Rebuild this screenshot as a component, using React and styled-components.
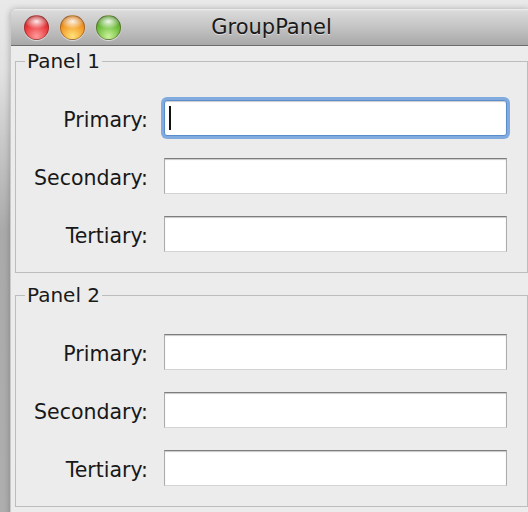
import React from 'react'
import styled, { createGlobalStyle } from 'styled-components'

const GlobalStyle = createGlobalStyle`
  html, body {
    margin: 0;
    height: 100%;
    overflow: hidden;
  }
  body {
    background: linear-gradient(#e9e9e9 0, #e2e2e2 70px, #aaaaaa 230px, #aeaeae 100%);
    font-family: "Lucida Grande", "DejaVu Sans", "Noto Sans", sans-serif;
    color: #1a1a1a;
  }
`

const Desktop = styled.div`
  padding: 9px 0 0 10px;
  height: 100vh;
  box-sizing: border-box;
`

const Window = styled.div`
  width: 521px;
  min-height: 520px;
  background: #ececec;
  border-left: 1px solid #c9c9c9;
  border-radius: 6px 6px 0 0;
  box-shadow: 0 0 6px rgba(0, 0, 0, 0.25);
  display: flex;
  flex-direction: column;
`

const TitleBar = styled.div`
  height: 36px;
  display: grid;
  grid-template-columns: 1fr auto 1fr;
  align-items: center;
  border-radius: 6px 6px 0 0;
  border-bottom: 1px solid #6d6d6d;
  background: linear-gradient(#efefef 0, #dadada 2px, #c4c4c4 50%, #a8a8a8 100%);
`

const Lights = styled.div`
  display: flex;
  gap: 11px;
  padding-left: 13px;
`

const palette = {
  red: ['#ff9a9a', '#e8383b', '#9c1b1e'],
  orange: ['#ffe27a', '#f29a26', '#b35e10'],
  green: ['#c9f29a', '#6cbb3a', '#3a7a1c'],
}

const Light = styled.span`
  width: 25px;
  height: 25px;
  border-radius: 50%;
  box-sizing: border-box;
  border: 1px solid rgba(60, 20, 10, 0.35);
  background:
    radial-gradient(ellipse 52% 32% at 50% 24%, rgba(255, 255, 255, 0.9), rgba(255, 255, 255, 0) 100%),
    radial-gradient(circle at 50% 88%, ${p => palette[p.$tone][0]} 0, ${p => palette[p.$tone][1]} 55%, ${p => palette[p.$tone][2]} 100%);
  box-shadow: 0 1px 1px rgba(255, 255, 255, 0.6);
`

const Title = styled.div`
  font-size: 21px;
  color: #1a1a1a;
  text-shadow: 0 1px 0 rgba(255, 255, 255, 0.5);
`

const Content = styled.div`
  display: flex;
  flex-direction: column;
  gap: 10px;
  padding: 3px 4px 0 4px;
`

const Panel = styled.fieldset`
  margin: 0;
  padding: 27px 18px 20px 0;
  border: 1px solid #bdbdbd;
  min-width: 0;
`

const Legend = styled.legend`
  margin-left: 9px;
  padding: 0 2px;
  font-size: 20px;
  line-height: 24px;
  color: #1a1a1a;
`

const Form = styled.div`
  display: grid;
  grid-template-columns: 132px 343px;
  column-gap: 16px;
  row-gap: 22px;
  align-items: center;
`

const Label = styled.label`
  text-align: right;
  font-size: 20.5px;
  padding-top: 3px;
  color: #181818;
`

const Field = styled.div`
  height: 36px;
  box-sizing: border-box;
  background: #fff;
  display: flex;
  align-items: center;
  border: 1px solid #ababab;
  border-top-color: #7d7d7d;
  border-bottom-color: #d4d4d4;
  box-shadow: inset 0 1px 1px rgba(0, 0, 0, 0.22);
  ${p => p.$focused && `
    border: 1px solid #5a8ccb;
    border-radius: 3px;
    box-shadow: 0 0 0 3px rgba(110, 160, 220, 0.85), inset 0 1px 1px rgba(0, 0, 0, 0.2);
  `}
`

const Caret = styled.span`
  width: 2px;
  height: 24px;
  margin-left: 4px;
  background: #111;
`

const fields = ['Primary', 'Secondary', 'Tertiary']

function GroupBox({ title, focusFirst }) {
  return (
    <Panel>
      <Legend>{title}</Legend>
      <Form>
        {fields.map((name, i) => (
          <React.Fragment key={name}>
            <Label>{name}:</Label>
            <Field $focused={focusFirst && i === 0}>
              {focusFirst && i === 0 && <Caret />}
            </Field>
          </React.Fragment>
        ))}
      </Form>
    </Panel>
  )
}

export default function App() {
  return (
    <>
      <GlobalStyle />
      <Desktop>
        <Window>
          <TitleBar>
            <Lights>
              <Light $tone="red" />
              <Light $tone="orange" />
              <Light $tone="green" />
            </Lights>
            <Title>GroupPanel</Title>
            <span />
          </TitleBar>
          <Content>
            <GroupBox title="Panel 1" focusFirst />
            <GroupBox title="Panel 2" />
          </Content>
        </Window>
      </Desktop>
    </>
  )
}
